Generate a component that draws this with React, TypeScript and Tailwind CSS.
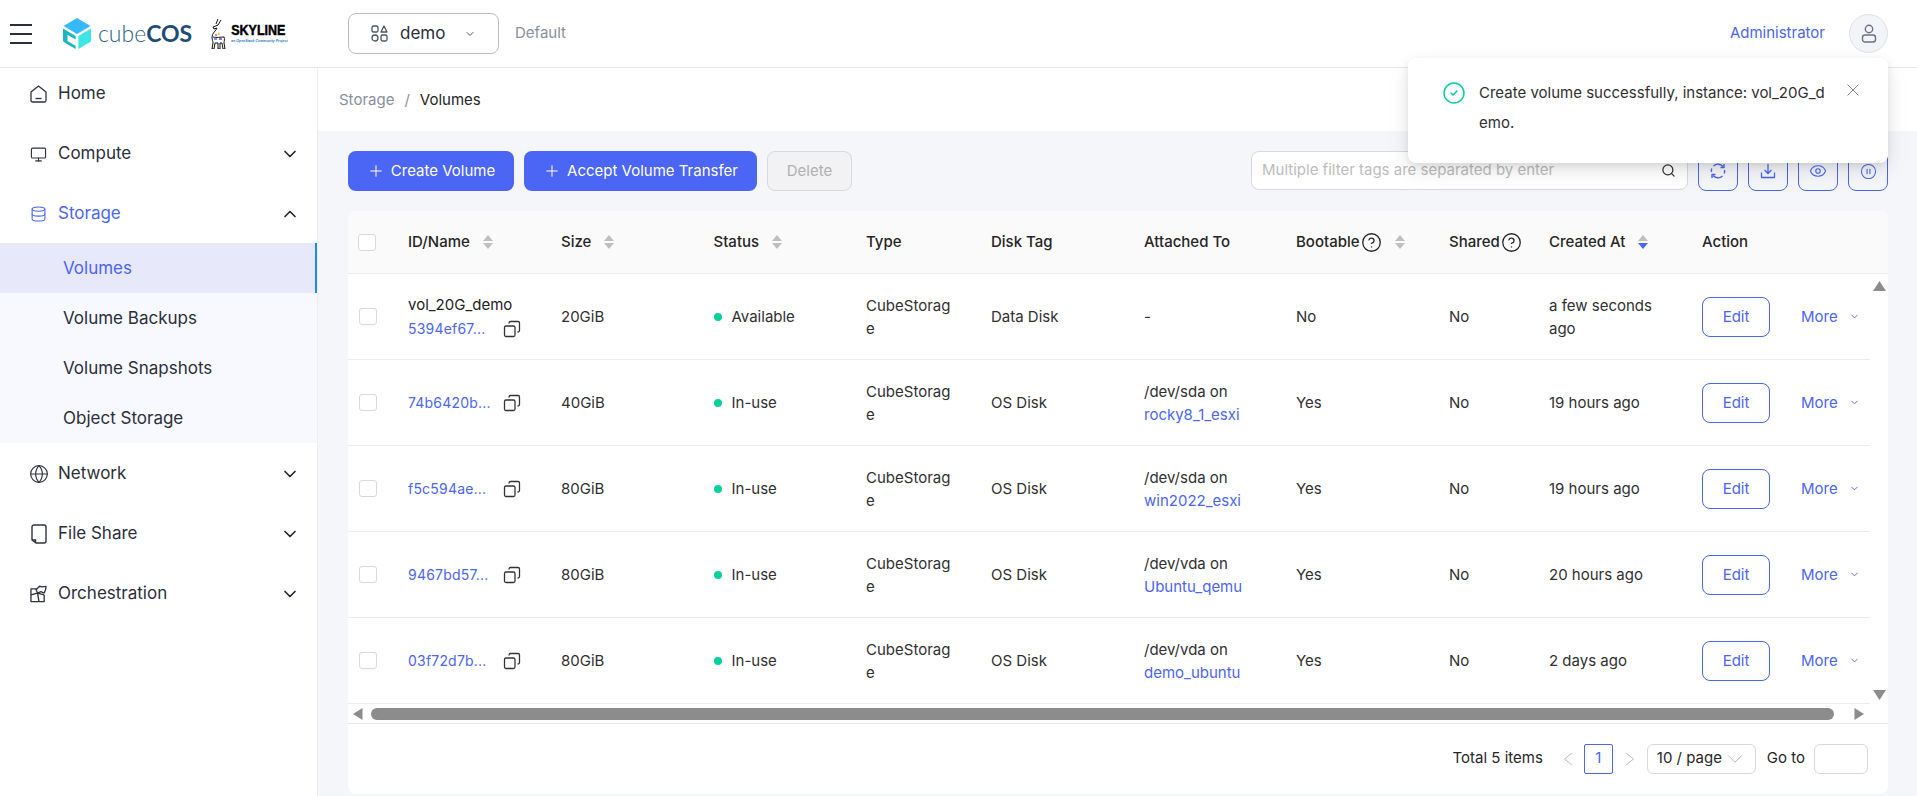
import { ChevronDown, ChevronUp, Plus, Search, Copy, Eye, CirclePause, CircleHelp, CircleCheck, Monitor, Database, Globe } from 'lucide-react'

function Logo() {
  return (
    <div className="flex items-center ml-[31px]">
      <svg width="28" height="31" viewBox="0 0 28 31">
        <path fill="#35b9fb" d="M14 0 27.500 8 14 16 .5 8z" />
        <path fill="#1fb3c0" d="M0 10.500 12.600 18v13L3 25.500 0 23zM4.500 16.800v6.200l8 4.700v-6.200z" />
        <path fill="#3de6e6" d="M28 10.500 15.400 18v13L28 23.500z" />
      </svg>
      <span className="ml-[7px] text-[23px] leading-none font-[Lato,sans-serif] font-light text-[#2f5f86]">cube</span>
      <span className="text-[23px] leading-none font-[Lato,sans-serif] font-bold text-[#1d4c78]">COS</span>
    </div>
  )
}

function Skyline() {
  return (
    <div className="flex items-center ml-[15px]">
      <svg width="20" height="30" viewBox="0 0 20 30" fill="none" stroke="#111" strokeWidth="1">
        <path d="M11 0 9 5M14 1l-3 5-5 2 1 2 3-1C9 12 5 14 5 18c0 3 1 4 1 6l-1 6h2l1-6M6 18c3 1 8 0 11 0 1 2 0 4 0 6l1 6h-2l-1-6-2 0 0 6h-2l0-6-3 0" strokeLinejoin="round" />
        <path stroke="#e0457b" strokeWidth="1.600" d="M8 16h2" />
        <path stroke="#f5b400" strokeWidth="1.600" d="M11 15h2" />
        <path stroke="#3a8ee6" strokeWidth="1.600" d="M7 20h3" />
        <path stroke="#7c4ddb" strokeWidth="1.600" d="M12 20h3" />
      </svg>
      <div className="ml-[4px] flex flex-col items-start font-['Liberation_Sans',sans-serif] mt-[2px]">
        <span className="text-[12.500px] leading-[12px] font-bold text-black [-webkit-text-stroke:0.4px_#000] [transform:scaleY(1.100)]">SKYLINE</span>
        <span className="mt-[2px] text-[3.500px] leading-[5px] font-bold italic text-[#2b7bbd] whitespace-nowrap">an OpenStack Community Project</span>
      </div>
    </div>
  )
}

function MenuIcon() {
  return (
    <svg width="22" height="20" viewBox="0 0 22 20" stroke="#2b2f3a" strokeWidth="2" className="ml-[10px]">
      <path d="M0 1h22M0 10h22M0 19h22" />
    </svg>
  )
}

function AppsIcon() {
  return (
    <svg width="17" height="17" viewBox="0 0 17 17" fill="none" stroke="#4b5563" strokeWidth="1.300">
      <rect x="1" y="1" width="6" height="6" rx="1.500" />
      <path d="M13 1 16 7H10z" strokeLinejoin="round" />
      <circle cx="4" cy="13" r="3" />
      <rect x="10" y="10" width="6" height="6" rx="1.500" />
    </svg>
  )
}

function HomeIcon() {
  return (
    <svg width="17" height="18" viewBox="0 0 17 18" fill="none" stroke="#2f3340" strokeWidth="1.300">
      <path d="M1 7 8.500 1 16 7v8.500a1.500 1.500 0 0 1-1.500 1.500h-12A1.500 1.500 0 0 1 1 15.500z" strokeLinejoin="round" />
      <path d="M5.500 13.500h6" />
    </svg>
  )
}

function FileIcon() {
  return (
    <svg width="16" height="20" viewBox="0 0 16 20" fill="none" stroke="#2f3340" strokeWidth="1.400">
      <path d="M3 1h10a2 2 0 0 1 2 2v14a2 2 0 0 1-2 2H5l-4-3V3a2 2 0 0 1 2-2z" strokeLinejoin="round" />
      <path d="M1 16h3.500v3" />
    </svg>
  )
}

function OrchestrationIcon() {
  return (
    <svg width="18" height="18" viewBox="0 0 18 18" fill="none" stroke="#2f3340" strokeWidth="1.400">
      <path d="M7 3.500H1v13.500h14v-7" strokeLinejoin="round" />
      <path d="M1 10l7-2 1.500 9M15 10 8 8" />
      <path d="M6.500 4.500 8 8l3.500-1.500L15 8l1.500-3.500L17 1l-4.500.5L10 .8z" strokeLinejoin="round" />
    </svg>
  )
}

function UserIcon() {
  return (
    <svg width="16" height="19" viewBox="0 0 16 19" fill="none" stroke="#6b7280" strokeWidth="1.400">
      <circle cx="8" cy="5" r="3.700" />
      <rect x="1.500" y="11" width="13" height="7" rx="2.500" />
    </svg>
  )
}

function RefreshIcon() {
  return (
    <svg width="16" height="16" viewBox="0 0 16 16" fill="none" stroke="#4b65f5" strokeWidth="1.400">
      <path d="M13 3.500A6.500 6.500 0 0 0 3.500 3M3 12.500A6.500 6.500 0 0 0 12.500 13" />
      <path d="M14 1v3.500h-3.500M2 15v-3.500h3.500" strokeLinejoin="round" />
      <path d="M1.700 5.500A7 7 0 0 0 1.500 9M14.300 10.500A7 7 0 0 0 14.500 7" />
    </svg>
  )
}

function DownloadIcon() {
  return (
    <svg width="16" height="16" viewBox="0 0 16 16" fill="none" stroke="#4b65f5" strokeWidth="1.300">
      <path d="M8 1v9M4.500 7 8 10.500 11.500 7" />
      <path d="M1.500 9.500v5h13v-5" strokeLinejoin="round" />
    </svg>
  )
}

function Sorter({ active }: { active?: boolean }) {
  return (
    <span className="inline-flex flex-col items-center gap-[2px] ml-[13px]">
      <svg width="10" height="6" viewBox="0 0 10 6"><path fill="#bfbfbf" d="M5 0 10 6H0z" /></svg>
      <svg width="10" height="6" viewBox="0 0 10 6"><path fill={active ? '#4b65f5' : '#bfbfbf'} d="M0 0h10L5 6z" /></svg>
    </span>
  )
}

function Check() {
  return <span className="block w-[18px] h-[17px] bg-white border border-[#d9d9d9] rounded-[3px]" />
}

function Cols() {
  return (
    <>
      <col className="w-[44px]" />
      <col className="w-[153px]" />
      <col className="w-[152.500px]" />
      <col className="w-[152.500px]" />
      <col className="w-[125px]" />
      <col className="w-[153px]" />
      <col className="w-[152px]" />
      <col className="w-[153px]" />
      <col className="w-[100px]" />
      <col className="w-[153px]" />
      <col className="w-[184px]" />
    </>
  )
}

type Item = { label: string; icon?: React.ReactNode; arrow?: 'down' | 'up'; blue?: boolean }

function NavItem({ label, icon, arrow, blue }: Item) {
  return (
    <div className={`h-[60px] flex items-center pl-[30px] pr-[17px] pt-[2px] text-[17px] ${blue ? 'text-[#4b65f5]' : 'text-[#2b2f3a]'}`}>
      <span className="w-[17px] flex justify-center">{icon}</span>
      <span className="ml-[11px] flex-1">{label}</span>
      {arrow === 'down' && <ChevronDown size={20} strokeWidth={2} className="text-[#1f2430]" />}
      {arrow === 'up' && <ChevronUp size={20} strokeWidth={2} className="text-[#1f2430]" />}
    </div>
  )
}

const rows = [
  { name: 'vol_20G_demo', id: '5394ef67...', size: '20GiB', status: 'Available', tag: 'Data Disk', dev: '-', server: '', boot: 'No', created: 'a few seconds ago' },
  { name: '', id: '74b6420b...', size: '40GiB', status: 'In-use', tag: 'OS Disk', dev: '/dev/sda on', server: 'rocky8_1_esxi', boot: 'Yes', created: '19 hours ago' },
  { name: '', id: 'f5c594ae...', size: '80GiB', status: 'In-use', tag: 'OS Disk', dev: '/dev/sda on', server: 'win2022_esxi', boot: 'Yes', created: '19 hours ago' },
  { name: '', id: '9467bd57...', size: '80GiB', status: 'In-use', tag: 'OS Disk', dev: '/dev/vda on', server: 'Ubuntu_qemu', boot: 'Yes', created: '20 hours ago' },
  { name: '', id: '03f72d7b...', size: '80GiB', status: 'In-use', tag: 'OS Disk', dev: '/dev/vda on', server: 'demo_ubuntu', boot: 'Yes', created: '2 days ago' },
]

const thClass = 'px-[16px] font-[450] text-left text-[15px] text-[#262626] border-b border-[#ececec]'
const tdClass = 'px-[16px] py-0 text-[15px] leading-[23px] text-[#303030] border-b border-[#ececec]'

export default function App() {
  return (
    <div className="relative h-screen w-full overflow-hidden bg-[#f5f6f9] font-[Inter,sans-serif] text-[15px] text-[#262626]">
      <header className="h-[68px] bg-white border-b border-[#e4e5ee] flex items-center pr-[29px]">
        <div className="w-[348px] shrink-0 flex items-center">
          <MenuIcon />
          <Logo />
          <Skyline />
        </div>
        <button className="w-[151px] h-[41px] bg-white border border-[#b9bdcb] rounded-[8px] flex items-center pl-[22px] pr-[22px] text-[#2b2f3a]">
          <AppsIcon />
          <span className="ml-[12px] text-[17px] flex-1 text-left">demo</span>
          <ChevronDown size={12} className="text-[#4b5563]" />
        </button>
        <span className="ml-[16px] text-[#8a8f9c]">Default</span>
        <span className="ml-auto text-[#4b65f5]">Administrator</span>
        <span className="ml-[24px] w-[39px] h-[39px] rounded-full bg-[#f3f4f8] border border-[#dfe1ea] flex items-center justify-center">
          <UserIcon />
        </span>
      </header>

      <div className="flex h-[728px]">
        <aside className="w-[318px] shrink-0 bg-white border-r border-[#eeeef2]">
          <div className="mt-[-5px]">
            <NavItem label="Home" icon={<HomeIcon />} />
            <NavItem label="Compute" icon={<Monitor size={19} strokeWidth={1.600} className="text-[#2f3340]" />} arrow="down" />
            <NavItem label="Storage" icon={<Database size={20} strokeWidth={1.500} />} arrow="up" blue />
            <div className="bg-[#f8f9fe] text-[17px] text-[#2b2f3a]">
              <div className="h-[50px] flex items-center pl-[63px] pt-[2px] bg-[#e7e9fb] text-[#4b65f5] border-r-2 border-[#1f8af0]">Volumes</div>
              <div className="h-[50px] flex items-center pl-[63px] pt-[2px]">Volume Backups</div>
              <div className="h-[50px] flex items-center pl-[63px] pt-[2px]">Volume Snapshots</div>
              <div className="h-[50px] flex items-center pl-[63px] pt-[2px]">Object Storage</div>
            </div>
            <NavItem label="Network" icon={<Globe size={20} strokeWidth={1.400} className="text-[#2f3340] shrink-0" />} arrow="down" />
            <NavItem label="File Share" icon={<FileIcon />} arrow="down" />
            <NavItem label="Orchestration" icon={<OrchestrationIcon />} arrow="down" />
          </div>
        </aside>

        <main className="flex-1 min-w-0">
          <div className="h-[63px] bg-white flex items-center pl-[21px] pt-[2px]">
            <span className="text-[#8a8f9c]">Storage</span>
            <span className="mx-[10px] text-[#8a8f9c]">/</span>
            <span>Volumes</span>
          </div>

          <div className="pl-[30px] pr-[29px] pt-[20px]">
            <div className="flex items-start h-[40px]">
              <button className="w-[166px] h-[40px] rounded-[8px] bg-[#4b65f5] text-white flex items-center justify-center gap-[6px]">
                <Plus size={18} strokeWidth={1.400} />Create Volume
              </button>
              <button className="ml-[10px] w-[233px] h-[40px] rounded-[8px] bg-[#4b65f5] text-white flex items-center justify-center gap-[6px]">
                <Plus size={18} strokeWidth={1.400} />Accept Volume Transfer
              </button>
              <button className="ml-[10px] w-[85px] h-[40px] rounded-[8px] bg-[#f2f2f4] border border-[#d9d9d9] text-[#b0b0b0]">Delete</button>
              <div className="ml-auto w-[437px] h-[39px] bg-white border border-[#d9d9d9] rounded-[8px] flex items-center pl-[10px] pr-[11px]">
                <span className="flex-1 text-[#bcbcbc]">Multiple filter tags are separated by enter</span>
                <Search size={15} className="text-[#333]" />
              </div>
              <div className="ml-[10px] flex gap-[10px]">
                <button className="w-[40px] h-[40px] rounded-[8px] border border-[#4b65f5] bg-[#f5f6f9] flex items-center justify-center"><RefreshIcon /></button>
                <button className="w-[40px] h-[40px] rounded-[8px] border border-[#4b65f5] bg-[#f5f6f9] flex items-center justify-center"><DownloadIcon /></button>
                <button className="w-[40px] h-[40px] rounded-[8px] border border-[#4b65f5] bg-[#f5f6f9] flex items-center justify-center"><Eye size={18} strokeWidth={1.500} className="text-[#4b65f5]" /></button>
                <button className="w-[40px] h-[40px] rounded-[8px] border border-[#4b65f5] bg-[#f5f6f9] flex items-center justify-center"><CirclePause size={17} strokeWidth={1.500} className="text-[#4b65f5]" /></button>
              </div>
            </div>

            <div className="mt-[20px] h-[583px] bg-white rounded-[8px] overflow-hidden">
              <div className="h-[63px] bg-[#fafafa]">
                <table className="table-fixed w-[1540px] border-separate border-spacing-0">
                  <colgroup>
                    <Cols />
                    <col className="w-[18px]" />
                  </colgroup>
                  <thead>
                    <tr className="h-[63px]">
                      <th className="pl-[10px] border-b border-[#ececec]"><Check /></th>
                      <th className={thClass}><span className="flex items-center">ID/Name<Sorter /></span></th>
                      <th className={thClass}><span className="flex items-center">Size<Sorter /></span></th>
                      <th className={thClass}><span className="flex items-center">Status<Sorter /></span></th>
                      <th className={thClass}>Type</th>
                      <th className={thClass}>Disk Tag</th>
                      <th className={thClass}>Attached To</th>
                      <th className={thClass}><span className="flex items-center">Bootable<CircleHelp size={21} strokeWidth={1.500} className="ml-[1px] shrink-0" /><Sorter /></span></th>
                      <th className={thClass}><span className="flex items-center">Shared<CircleHelp size={21} strokeWidth={1.500} className="ml-[1px] shrink-0" /></span></th>
                      <th className={thClass}><span className="flex items-center">Created At<Sorter active /></span></th>
                      <th className={thClass}>Action</th>
                      <th className="border-b border-[#ececec]" />
                    </tr>
                  </thead>
                </table>
              </div>

              <div className="flex">
                <div className="w-[1522px] shrink-0">
                  <table className="table-fixed w-[1522px] border-separate border-spacing-0">
                    <colgroup><Cols /></colgroup>
                    <tbody>
                      {rows.map((r) => (
                        <tr key={r.id} className="h-[86px]">
                          <td className="pl-[11px] border-b border-[#ececec]"><Check /></td>
                          <td className={tdClass}>
                            {r.name && <div className="mb-[1px] text-[#222]">{r.name}</div>}
                            <div className="flex items-center">
                              <span className="w-[94.500px] shrink-0 text-[#4b65f5] text-[14px] tracking-[0.2px]">{r.id}</span>
                              <Copy size={18} strokeWidth={1.700} className="shrink-0 text-[#333] [transform:scaleX(-1)]" />
                            </div>
                          </td>
                          <td className={tdClass}>{r.size}</td>
                          <td className={tdClass}>
                            <span className="flex items-center">
                              <span className="w-[8px] h-[8px] rounded-full bg-[#06d09e] mr-[10px]" />
                              {r.status}
                            </span>
                          </td>
                          <td className={tdClass}><div className="w-[90px] break-all">CubeStorage</div></td>
                          <td className={tdClass}>{r.tag}</td>
                          <td className={tdClass}>
                            <div>{r.dev}</div>
                            {r.server && <div className="text-[#4b65f5]">{r.server}</div>}
                          </td>
                          <td className={tdClass}>{r.boot}</td>
                          <td className={tdClass}>No</td>
                          <td className={tdClass}>{r.created}</td>
                          <td className="pl-[16px] border-b border-[#ececec]">
                            <div className="flex items-center">
                              <button className="w-[68px] h-[40px] pt-[2px] shrink-0 rounded-[8px] border border-[#4b65f5] text-[#4b65f5] bg-white">Edit</button>
                              <span className="ml-[31px] pt-[2px] text-[#4b65f5]">More</span>
                              <ChevronDown size={11} className="ml-[11px] text-[#4b65f5]" />
                            </div>
                          </td>
                        </tr>
                      ))}
                    </tbody>
                  </table>
                  <div className="h-[19px] flex items-center pl-[5px] pr-[6px]">
                    <svg width="10" height="12" viewBox="0 0 10 12"><path fill="#8c8c8c" d="M9.500 0v12L0 6z" /></svg>
                    <div className="ml-[8px] flex-1 h-[12px] rounded-full bg-[#8c8c8c]" />
                    <svg className="ml-[20px]" width="10" height="12" viewBox="0 0 10 12"><path fill="#8c8c8c" d="M.5 0v12L10 6z" /></svg>
                  </div>
                </div>
                <div className="w-[18px] h-[449px] flex flex-col items-center justify-between pt-[7px] pb-[23px]">
                  <svg width="13" height="10" viewBox="0 0 13 10"><path fill="#8c8c8c" d="M6.500 0 13 10H0z" /></svg>
                  <svg width="13" height="10" viewBox="0 0 13 10"><path fill="#8c8c8c" d="M0 0h13L6.500 10z" /></svg>
                </div>
              </div>

              <div className="h-[71px] border-t border-[#e4e5ee] flex items-center justify-end pr-[20px] pb-[1px]">
                <span>Total 5 items</span>
                <svg className="ml-[20px]" width="10" height="14" viewBox="0 0 10 14" fill="none" stroke="#bdbdbd"><path d="M9 1 1.500 7 9 13" /></svg>
                <span className="ml-[11px] w-[29px] h-[30px] rounded-[2px] border border-[#4b65f5] text-[#4b65f5] flex items-center justify-center">1</span>
                <svg className="ml-[12px]" width="10" height="14" viewBox="0 0 10 14" fill="none" stroke="#bdbdbd"><path d="M1 1 8.500 7 1 13" /></svg>
                <span className="ml-[12px] w-[109px] h-[30px] rounded-[6px] border border-[#d9d9d9] flex items-center pl-[9px]">
                  10 / page
                  <ChevronDown size={26} strokeWidth={0.800} className="shrink-0 text-[#a8a8a8]" />
                </span>
                <span className="ml-[11px]">Go to</span>
                <span className="ml-[9px] w-[54px] h-[30px] rounded-[6px] border border-[#d9d9d9]" />
              </div>
            </div>
          </div>
        </main>
      </div>

      <div className="absolute top-[58px] right-[29px] w-[480px] h-[105px] bg-white rounded-[8px] shadow-[0_6px_16px_rgba(0,0,0,0.08),0_3px_6px_rgba(0,0,0,0.06),0_9px_28px_rgba(0,0,0,0.05)] flex items-start pl-[34px] pt-[20px]">
        <CircleCheck size={24} strokeWidth={1.500} className="mt-[3px] shrink-0 text-[#06d09e]" />
        <p className="ml-[13px] w-[354px] shrink-0 break-all leading-[30px] text-[#303030]">Create volume successfully, instance: vol_20G_demo.</p>
        <svg className="ml-[14px] mt-[6px] shrink-0" width="12" height="12" viewBox="0 0 12 12" stroke="#8c8c8c"><path d="M.5.5l11 11M11.500.5l-11 11" /></svg>
      </div>
    </div>
  )
}
